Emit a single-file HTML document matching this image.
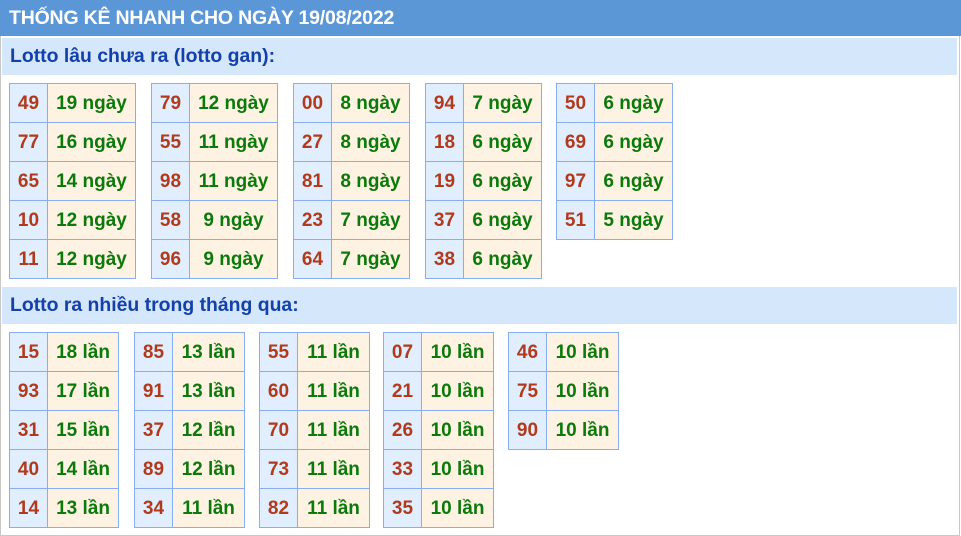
<!DOCTYPE html>
<html><head><meta charset="utf-8"><style>
*{margin:0;padding:0;box-sizing:border-box}
body{width:961px;height:532px;background:#fff;font-family:"Liberation Sans",Arial,sans-serif;position:relative;overflow:hidden}
.frame{position:absolute;left:0;top:36px;width:960px;height:500px;border:1px solid #c8c8c8;border-top:none}
.hd{position:absolute;left:0;top:0;width:961px;height:36px;background:#5b97d7;color:#fff;font-weight:bold;font-size:19.5px;line-height:36px;padding-left:9px;letter-spacing:-0.2px}
.bar{position:absolute;left:2px;width:955px;background:#d4e7fb;color:#1340aa;font-weight:bold;font-size:19.4px;padding-left:8px}
table{position:absolute;border-collapse:collapse}
td{border:1px solid #88adf2;height:39px;font-weight:bold;font-size:19px;text-align:center;padding:2px 0 0 0}
td.n{background:#e1eefd;color:#b23a1c;width:38px}
td.v{background:#fef3e2;color:#0b7a0b}
</style></head><body>
<div class="hd">THỐNG KÊ NHANH CHO NGÀY 19/08/2022</div>
<div class="frame"></div>
<div class="bar" style="top:38px;height:37px;line-height:37px">Lotto lâu chưa ra (lotto gan):</div>
<div class="bar" style="top:287px;height:37px;line-height:37px">Lotto ra nhiều trong tháng qua:</div>

<table style="left:9px;top:83px"><tr><td class="n">49</td><td class="v" style="width:88px">19 ngày</td></tr><tr><td class="n">77</td><td class="v">16 ngày</td></tr><tr><td class="n">65</td><td class="v">14 ngày</td></tr><tr><td class="n">10</td><td class="v">12 ngày</td></tr><tr><td class="n">11</td><td class="v">12 ngày</td></tr></table>
<table style="left:151px;top:83px"><tr><td class="n">79</td><td class="v" style="width:88px">12 ngày</td></tr><tr><td class="n">55</td><td class="v">11 ngày</td></tr><tr><td class="n">98</td><td class="v">11 ngày</td></tr><tr><td class="n">58</td><td class="v">9 ngày</td></tr><tr><td class="n">96</td><td class="v">9 ngày</td></tr></table>
<table style="left:293px;top:83px"><tr><td class="n">00</td><td class="v" style="width:78px">8 ngày</td></tr><tr><td class="n">27</td><td class="v">8 ngày</td></tr><tr><td class="n">81</td><td class="v">8 ngày</td></tr><tr><td class="n">23</td><td class="v">7 ngày</td></tr><tr><td class="n">64</td><td class="v">7 ngày</td></tr></table>
<table style="left:425px;top:83px"><tr><td class="n">94</td><td class="v" style="width:78px">7 ngày</td></tr><tr><td class="n">18</td><td class="v">6 ngày</td></tr><tr><td class="n">19</td><td class="v">6 ngày</td></tr><tr><td class="n">37</td><td class="v">6 ngày</td></tr><tr><td class="n">38</td><td class="v">6 ngày</td></tr></table>
<table style="left:556px;top:83px"><tr><td class="n">50</td><td class="v" style="width:78px">6 ngày</td></tr><tr><td class="n">69</td><td class="v">6 ngày</td></tr><tr><td class="n">97</td><td class="v">6 ngày</td></tr><tr><td class="n">51</td><td class="v">5 ngày</td></tr></table>

<table style="left:9px;top:332px"><tr><td class="n">15</td><td class="v" style="width:71px">18 lần</td></tr><tr><td class="n">93</td><td class="v">17 lần</td></tr><tr><td class="n">31</td><td class="v">15 lần</td></tr><tr><td class="n">40</td><td class="v">14 lần</td></tr><tr><td class="n">14</td><td class="v">13 lần</td></tr></table>
<table style="left:134px;top:332px"><tr><td class="n">85</td><td class="v" style="width:72px">13 lần</td></tr><tr><td class="n">91</td><td class="v">13 lần</td></tr><tr><td class="n">37</td><td class="v">12 lần</td></tr><tr><td class="n">89</td><td class="v">12 lần</td></tr><tr><td class="n">34</td><td class="v">11 lần</td></tr></table>
<table style="left:259px;top:332px"><tr><td class="n">55</td><td class="v" style="width:72px">11 lần</td></tr><tr><td class="n">60</td><td class="v">11 lần</td></tr><tr><td class="n">70</td><td class="v">11 lần</td></tr><tr><td class="n">73</td><td class="v">11 lần</td></tr><tr><td class="n">82</td><td class="v">11 lần</td></tr></table>
<table style="left:383px;top:332px"><tr><td class="n">07</td><td class="v" style="width:72px">10 lần</td></tr><tr><td class="n">21</td><td class="v">10 lần</td></tr><tr><td class="n">26</td><td class="v">10 lần</td></tr><tr><td class="n">33</td><td class="v">10 lần</td></tr><tr><td class="n">35</td><td class="v">10 lần</td></tr></table>
<table style="left:508px;top:332px"><tr><td class="n">46</td><td class="v" style="width:72px">10 lần</td></tr><tr><td class="n">75</td><td class="v">10 lần</td></tr><tr><td class="n">90</td><td class="v">10 lần</td></tr></table>
</body></html>
